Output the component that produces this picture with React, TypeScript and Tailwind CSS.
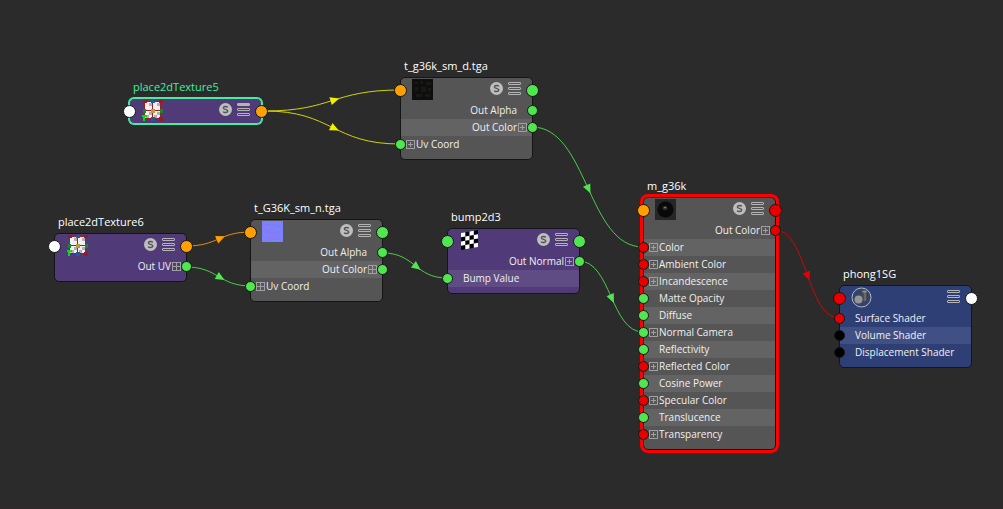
import React from 'react'

type Attr = {
    label: string
    side: 'in' | 'out'
    port: string
    expand?: 'plus' | 'grid'
}

type NodeData = {
    title: string
    place: string
    body: string
    stripe: string
    frame?: string
    titleColor?: string
    icon: React.ReactNode
    left: string
    right: string
    solo?: boolean
    collapsed?: boolean
    attrs: Attr[]
}

const GREEN = 'bg-[#50e650]'
const RED = 'bg-[#e60000]'
const ORANGE = 'bg-[#ffa000]'
const WHITE = 'bg-white'
const BLACK = 'bg-black'

const GRAY_BODY = 'bg-[#555555]'
const GRAY_STRIPE = 'bg-[#636363]'
const PURPLE_BODY = 'bg-[#503b78]'
const PURPLE_STRIPE = 'bg-[#5f4c84]'

function PlaceIcon() {
    return (
        <svg width="22" height="21" viewBox="-2 0 22 21" shapeRendering="crispEdges">
            <rect x="2" y="2" width="16" height="17" fill="#f2f0f0" />
            <path d="M6 3h3v3h-3z M14 3h3v3h-3z M6 12h3v3h-3z M14 12h3v3h-3z M3 15h3v3h-3z M11 15h3v3h-3z" fill="#b4aeb1" />
            <path d="M1 1h17v1h-17z M1 18h17v1h-17z M1 1h1v18h-1z M17 1h1v18h-1z M9 1h1v18h-1z M1 10h17v1h-17z" fill="#9c1f28" />
            <path d="M0 0h4v3h-4z M16 0h4v3h-4z M16 17h4v4h-4z" fill="#941c24" />
            <path d="M8 0h4v3h-4z M8 17h4v4h-4z" fill="#2b559f" />
            <path d="M0 9h3v4h-3z M17 9h3v4h-3z" fill="#158a24" />
            <rect x="8" y="9" width="4" height="4" fill="#b99a35" />
            <path d="M-1 15h5v2h-2v4h-2v-4h-1z" fill="#00e010" />
        </svg>
    )
}

function DarkMapIcon() {
    return (
        <svg width="21" height="21" viewBox="0 0 21 21">
            <rect width="21" height="21" fill="#0e0e0d" />
            <path d="M2 3h4v2h-4z M8 2h3v3h-3z M14 3h5v3h-5z M3 8h3v4h-3z M9 8h5v5h-5z M16 9h3v3h-3z M4 15h6v3h-6z M13 15h5v3h-5z" fill="#191816" />
        </svg>
    )
}

function NormalMapIcon() {
    return (
        <svg width="21" height="21" viewBox="0 0 21 21">
            <rect width="21" height="21" fill="#7d80fb" />
            <path d="M2 3.5h6 M11 4.5h8 M4 11.5h12 M7 17.5h10" stroke="#8c74f2" strokeWidth="1" />
            <path d="M3 6.5h4 M13 8.5h5 M2 14.5h5 M9 19.5h8" stroke="#6f91fa" strokeWidth="1" />
            <path d="M6 10.5h2 M14 12.5h3" stroke="#a866e6" strokeWidth="1" />
        </svg>
    )
}

function CheckerIcon() {
    return (
        <svg width="21" height="21" viewBox="-1 0 21 21">
            <path d="M1 3L18 0V17L1 20z" fill="#000" />
            <path d="M1 3L5.3 2.3V6.5L1 7.3z M9.5 1.5L13.8 .8V5L9.5 5.8z M5.3 6.5L9.5 5.8V10L5.3 10.7z M13.8 5L18 4.3V8.5L13.8 9.3z M1 11.5L5.3 10.7V15L1 15.8z M9.5 10L13.8 9.3V13.5L9.5 14.3z M5.3 15L9.5 14.3V18.5L5.3 19.3z M13.8 13.5L18 12.7V17L13.8 17.7z" fill="#fff" />
        </svg>
    )
}

function BallIcon() {
    return (
        <svg width="21" height="21" viewBox="0 0 21 21">
            <rect width="21" height="21" fill="#262626" />
            <circle cx="10.5" cy="10.5" r="8" fill="#090909" />
            <ellipse cx="10" cy="9" rx="2.5" ry="2" fill="#343434" />
            <path d="M9 8h2v1h-2z" fill="#777" />
        </svg>
    )
}

function ShadingGroupIcon() {
    return (
        <svg width="21" height="21" viewBox="0 0 21 21">
            <circle cx="10.5" cy="10.5" r="9.5" fill="#33436c" stroke="#b4b8c2" strokeWidth="1" />
            <path d="M11 4h5v9q-2.5 2-5 0z" fill="#4c4c4e" />
            <path d="M13 4h2v10h-2z" fill="#68686a" />
            <ellipse cx="13.5" cy="4.5" rx="2.5" ry="1" fill="#909090" />
            <circle cx="7.5" cy="12.5" r="4" fill="#969696" />
        </svg>
    )
}

function SoloBadge() {
    return (
        <svg width="13" height="13" viewBox="0 0 13 13">
            <circle cx="6.5" cy="6.5" r="6.5" fill="#bebebe" />
            <path d="M8.8 4.3C8 3.2 4.4 3 4.4 4.9C4.4 6.8 8.8 6 8.8 8C8.8 10 5 9.8 4.1 8.6" fill="none" stroke="#55505a" strokeWidth="1.4" />
        </svg>
    )
}

function ViewModeIcon({ collapsed }: { collapsed?: boolean }) {
    return (
        <svg width="13" height="13" viewBox="0 0 13 13" fill="none" stroke="#b4b4b4">
            <rect x=".5" y=".5" width="12" height="2" rx=".5" fill={collapsed ? '#b4b4b4' : 'none'} />
            <rect x=".5" y="5.5" width="12" height="2" rx=".5" />
            <rect x=".5" y="10.5" width="12" height="2" rx=".5" />
        </svg>
    )
}

function ExpandIcon({ kind }: { kind: 'plus' | 'grid' }) {
    return (
        <svg width="9" height="9" viewBox="0 0 9 9" fill="none" stroke="#a0a0a0">
            <rect x=".5" y=".5" width="8" height="8" />
            <path d={kind === 'grid' ? 'M4.5 0v9M0 4.5h9' : 'M4.5 2v5M2 4.5h5'} />
        </svg>
    )
}

function Port({ color, big }: { color: string; big?: boolean }) {
    return <span className={`shrink-0 rounded-full border border-[#151515] ${big ? 'size-[13px]' : 'size-[11px]'} ${color}`} />
}

function AttrRow({ attr, className }: { attr: Attr; className: string }) {
    const isIn = attr.side === 'in'

    return (
        <li className={`flex items-center h-[17px] ${isIn ? '' : 'flex-row-reverse'} ${className}`}>
            <span className={`flex ${isIn ? '-ml-[6px]' : '-mr-[6px]'}`}>
                <Port color={attr.port} />
            </span>
            <span className={`flex w-[10px] shrink-0 ${isIn ? '' : 'justify-end'}`}>
                {attr.expand && <ExpandIcon kind={attr.expand} />}
            </span>
            <span className="whitespace-nowrap pb-0.5 text-[10px] leading-4 text-[#f0f0f0]">{attr.label}</span>
        </li>
    )
}

function GraphNode({ node }: { node: NodeData }) {
    return (
        <article className={`absolute w-[133px] ${node.place}`}>
            <h2 className={`absolute bottom-full left-1 mb-px whitespace-nowrap text-[11px] leading-5 ${node.titleColor ?? 'text-white'}`}>{node.title}</h2>
            <div className={`rounded-[5px] border ${node.body} ${node.frame ?? 'border-[#151515]'}`}>
                <div className="flex items-center justify-between h-6">
                    <span className="flex items-center gap-[5px] -ml-[7px]">
                        <Port color={node.left} big />
                        <span className="pb-px">{node.icon}</span>
                    </span>
                    <span className="flex items-center gap-[5px] -mr-[7px]">
                        <span className="flex gap-[5px] pb-[3px]">
                            {node.solo && <SoloBadge />}
                            <ViewModeIcon collapsed={node.collapsed} />
                        </span>
                        <Port color={node.right} big />
                    </span>
                </div>
                {node.attrs.length > 0 && (
                    <ul className="pb-[6px]">
                        {node.attrs.map((attr, i) => (
                            <AttrRow key={attr.label} attr={attr} className={i % 2 ? node.stripe : ''} />
                        ))}
                    </ul>
                )}
            </div>
        </article>
    )
}

const nodes: NodeData[] = [
    {
        title: 'place2dTexture5',
        place: 'left-[129px] top-[98px]',
        body: PURPLE_BODY,
        stripe: PURPLE_STRIPE,
        frame: 'border-[#40f0a0] ring-1 ring-[#40f0a0]',
        titleColor: 'text-[#40f0a0]',
        icon: <PlaceIcon />,
        left: WHITE,
        right: ORANGE,
        solo: true,
        collapsed: true,
        attrs: [],
    },
    {
        title: 't_g36k_sm_d.tga',
        place: 'left-[400px] top-[77px]',
        body: GRAY_BODY,
        stripe: GRAY_STRIPE,
        icon: <DarkMapIcon />,
        left: ORANGE,
        right: GREEN,
        solo: true,
        attrs: [
            { label: 'Out Alpha', side: 'out', port: GREEN },
            { label: 'Out Color', side: 'out', port: GREEN, expand: 'plus' },
            { label: 'Uv Coord', side: 'in', port: GREEN, expand: 'plus' },
        ],
    },
    {
        title: 'place2dTexture6',
        place: 'left-[54px] top-[233px]',
        body: PURPLE_BODY,
        stripe: PURPLE_STRIPE,
        icon: <PlaceIcon />,
        left: WHITE,
        right: ORANGE,
        solo: true,
        attrs: [{ label: 'Out UV', side: 'out', port: GREEN, expand: 'grid' }],
    },
    {
        title: 't_G36K_sm_n.tga',
        place: 'left-[250px] top-[219px]',
        body: GRAY_BODY,
        stripe: GRAY_STRIPE,
        icon: <NormalMapIcon />,
        left: ORANGE,
        right: GREEN,
        solo: true,
        attrs: [
            { label: 'Out Alpha', side: 'out', port: GREEN },
            { label: 'Out Color', side: 'out', port: GREEN, expand: 'grid' },
            { label: 'Uv Coord', side: 'in', port: GREEN, expand: 'grid' },
        ],
    },
    {
        title: 'bump2d3',
        place: 'left-[447px] top-[228px]',
        body: PURPLE_BODY,
        stripe: PURPLE_STRIPE,
        icon: <CheckerIcon />,
        left: GREEN,
        right: GREEN,
        solo: true,
        attrs: [
            { label: 'Out Normal', side: 'out', port: GREEN, expand: 'plus' },
            { label: 'Bump Value', side: 'in', port: GREEN },
        ],
    },
    {
        title: 'm_g36k',
        place: 'left-[643px] top-[197px]',
        body: GRAY_BODY,
        stripe: GRAY_STRIPE,
        frame: 'border-[#151515] ring-3 ring-[#ff0000]',
        icon: <BallIcon />,
        left: ORANGE,
        right: RED,
        solo: true,
        attrs: [
            { label: 'Out Color', side: 'out', port: RED, expand: 'plus' },
            { label: 'Color', side: 'in', port: RED, expand: 'plus' },
            { label: 'Ambient Color', side: 'in', port: RED, expand: 'plus' },
            { label: 'Incandescence', side: 'in', port: RED, expand: 'plus' },
            { label: 'Matte Opacity', side: 'in', port: GREEN },
            { label: 'Diffuse', side: 'in', port: GREEN },
            { label: 'Normal Camera', side: 'in', port: GREEN, expand: 'plus' },
            { label: 'Reflectivity', side: 'in', port: GREEN },
            { label: 'Reflected Color', side: 'in', port: RED, expand: 'plus' },
            { label: 'Cosine Power', side: 'in', port: GREEN },
            { label: 'Specular Color', side: 'in', port: RED, expand: 'plus' },
            { label: 'Translucence', side: 'in', port: GREEN },
            { label: 'Transparency', side: 'in', port: RED, expand: 'plus' },
        ],
    },
    {
        title: 'phong1SG',
        place: 'left-[839px] top-[285px]',
        body: 'bg-[#2e3f75]',
        stripe: 'bg-[#405085]',
        icon: <ShadingGroupIcon />,
        left: RED,
        right: WHITE,
        attrs: [
            { label: 'Surface Shader', side: 'in', port: RED },
            { label: 'Volume Shader', side: 'in', port: BLACK },
            { label: 'Displacement Shader', side: 'in', port: BLACK },
        ],
    },
]

const wires = [
    { from: [265, 111], to: [400, 90], color: '#f0f000' },
    { from: [265, 111], to: [400, 144], color: '#f0f000' },
    { from: [532, 127], to: [643, 247], color: '#50e650' },
    { from: [186, 246], to: [251, 232], color: '#ffa000' },
    { from: [186, 267], to: [251, 286], color: '#50e650' },
    { from: [383, 253], to: [447, 278], color: '#50e650' },
    { from: [579, 261], to: [643, 332], color: '#50e650' },
    { from: [775, 230], to: [839, 318], color: '#e60000' },
]

function Wire({ from, to, color }: { from: number[]; to: number[]; color: string }) {
    const [x1, y1] = from
    const [x2, y2] = to
    const half = (x2 - x1) / 2
    const midX = (x1 + x2) / 2
    const midY = (y1 + y2) / 2
    // tangent of the curve at its midpoint
    const angle = (Math.atan2(y2 - y1, half) * 180) / Math.PI

    return (
        <g>
            <path d={`M${x1} ${y1}C${x1 + half} ${y1} ${x2 - half} ${y2} ${x2} ${y2}`} fill="none" stroke={color} strokeOpacity=".85" />
            <path d="M-2-4L7 0L-2 4z" fill={color} transform={`translate(${midX} ${midY}) rotate(${angle})`} />
        </g>
    )
}

export default function App() {
    return (
        <main className="relative min-h-screen overflow-hidden bg-[#2b2b2b] border-b-2 border-[#2f282c] font-['Open_Sans','Noto_Sans',sans-serif]">
            <svg className="absolute inset-0 size-full">
                {wires.map((wire, i) => (
                    <Wire key={i} {...wire} />
                ))}
            </svg>
            {nodes.map((node) => (
                <GraphNode key={node.title} node={node} />
            ))}
        </main>
    )
}
